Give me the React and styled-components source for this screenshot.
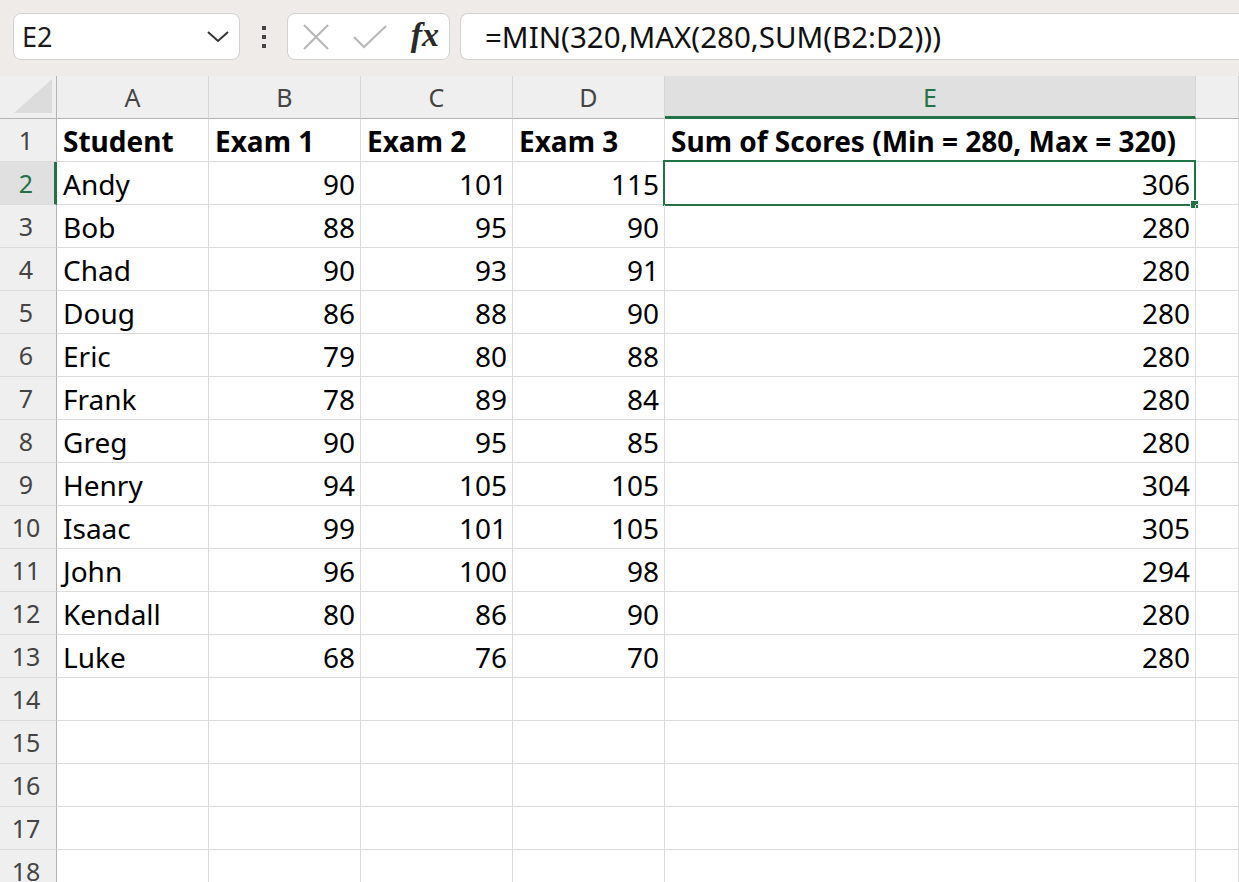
import React from 'react';
import styled, { createGlobalStyle } from 'styled-components';

const GlobalStyle = createGlobalStyle`
  html, body {
    margin: 0;
    padding: 0;
    background: #ffffff;
    overflow: hidden;
  }
  body {
    font-family: "Noto Sans", "Open Sans", sans-serif;
  }
`;

const GREEN = '#217346';

const columns = ['A', 'B', 'C', 'D', 'E', ''];
const widths = '57px 152px 152px 152px 152px 531px 1fr';

const data = [
  ['Student', 'Exam 1', 'Exam 2', 'Exam 3', 'Sum of Scores (Min = 280, Max = 320)'],
  ['Andy', 90, 101, 115, 306],
  ['Bob', 88, 95, 90, 280],
  ['Chad', 90, 93, 91, 280],
  ['Doug', 86, 88, 90, 280],
  ['Eric', 79, 80, 88, 280],
  ['Frank', 78, 89, 84, 280],
  ['Greg', 90, 95, 85, 280],
  ['Henry', 94, 105, 105, 304],
  ['Isaac', 99, 101, 105, 305],
  ['John', 96, 100, 98, 294],
  ['Kendall', 80, 86, 90, 280],
  ['Luke', 68, 76, 70, 280],
];

const ROWS = 18;

export default function App() {
  return (
    <Page>
      <GlobalStyle />
      <Toolbar>
        <NameBox>
          <span>E2</span>
          <svg width="24" height="14" viewBox="0 0 24 14">
            <path d="M2 2 L12 11 L22 2" fill="none" stroke="#333" strokeWidth="2" />
          </svg>
        </NameBox>
        <Dots>
          <i />
          <i />
          <i />
        </Dots>
        <FxBox>
          <svg width="28" height="28" viewBox="0 0 28 28">
            <path d="M2 2 L26 26 M26 2 L2 26" stroke="#b8b8b8" strokeWidth="2.2" fill="none" />
          </svg>
          <svg width="36" height="26" viewBox="0 0 36 26">
            <path d="M2 13 L12 23 L34 2" stroke="#b8b8b8" strokeWidth="2.2" fill="none" />
          </svg>
          <Fx>fx</Fx>
        </FxBox>
        <FormulaBox>=MIN(320,MAX(280,SUM(B2:D2)))</FormulaBox>
      </Toolbar>

      <Sheet>
        <Corner>
          <svg width="40" height="36" viewBox="0 0 40 36">
            <path d="M38 0 L38 34 L0 34 Z" fill="#dcdcdc" />
          </svg>
        </Corner>
        {columns.map((c, i) => (
          <ColHead key={i} $active={c === 'E'}>
            {c}
          </ColHead>
        ))}

        {Array.from({ length: ROWS }).map((_, r) => {
          const row = data[r];
          return (
            <React.Fragment key={r}>
              <RowHead $active={r === 1}>{r + 1}</RowHead>
              {columns.map((c, ci) => {
                const v = row ? row[ci] : undefined;
                const num = typeof v === 'number';
                return (
                  <Cell key={ci} $bold={r === 0} $num={num}>
                    {v}
                    {r === 1 && ci === 4 && <Selection />}
                  </Cell>
                );
              })}
            </React.Fragment>
          );
        })}
      </Sheet>
    </Page>
  );
}

const Page = styled.div`
  width: 1239px;
  height: 882px;
  overflow: hidden;
  background: #ffffff;
`;

const Toolbar = styled.div`
  height: 76px;
  box-sizing: border-box;
  background: #eeebe8;
  display: flex;
  align-items: flex-start;
  padding: 13px 0 0 13px;
`;

const Box = styled.div`
  height: 47px;
  box-sizing: border-box;
  background: #ffffff;
  border: 1px solid #d4d2cf;
  border-radius: 8px;
  display: flex;
  align-items: center;
`;

const NameBox = styled(Box)`
  width: 227px;
  padding: 0 9px 0 8px;
  justify-content: space-between;
  font-size: 27px;
  color: #1a1a1a;
`;

const Dots = styled.div`
  width: 47px;
  height: 47px;
  display: flex;
  flex-direction: column;
  align-items: center;
  justify-content: center;
  gap: 5px;

  i {
    display: block;
    width: 4px;
    height: 4px;
    background: #444;
  }
`;

const FxBox = styled(Box)`
  width: 163px;
  padding: 0 10px 0 14px;
  justify-content: space-between;
`;

const Fx = styled.span`
  font-family: "Liberation Serif", serif;
  font-style: italic;
  font-weight: bold;
  font-size: 34px;
  color: #2a2a2a;
  margin-top: -4px;
`;

const FormulaBox = styled(Box)`
  flex: 1;
  margin-left: 10px;
  padding-left: 24px;
  border-top-right-radius: 0;
  border-bottom-right-radius: 0;
  border-right: none;
  font-size: 29.5px;
  color: #111;
  white-space: nowrap;
`;

const Sheet = styled.div`
  display: grid;
  grid-template-columns: ${widths};
  grid-auto-rows: 43px;
  grid-template-rows: 43px;
`;

const HeadBase = styled.div`
  box-sizing: border-box;
  background: #efefef;
  display: flex;
  align-items: center;
  color: #444;
  font-size: 25px;
`;

const Corner = styled(HeadBase)`
  border-bottom: 1px solid #b4b4b4;
  border-right: 1px solid #b4b4b4;
  align-items: flex-end;
  justify-content: flex-end;
  padding: 0 2px 3px 0;
`;

const ColHead = styled(HeadBase)`
  justify-content: center;
  border-right: 1px solid #d6d6d6;
  border-bottom: ${(p) => (p.$active ? `3px solid ${GREEN}` : '1px solid #b4b4b4')};
  background: ${(p) => (p.$active ? '#e0e0e0' : '#efefef')};
  color: ${(p) => (p.$active ? GREEN : '#444')};
  padding-top: ${(p) => (p.$active ? '2px' : '0')};
`;

const RowHead = styled(HeadBase)`
  justify-content: center;
  padding-right: 4px;
  border-bottom: 1px solid #dcdcdc;
  border-right: ${(p) => (p.$active ? `3px solid ${GREEN}` : '1px solid #b4b4b4')};
  background: ${(p) => (p.$active ? '#e0e0e0' : '#efefef')};
  color: ${(p) => (p.$active ? GREEN : '#444')};
  padding-left: ${(p) => (p.$active ? '2px' : '0')};
`;

const Cell = styled.div`
  position: relative;
  box-sizing: border-box;
  border-right: 1px solid #dcdcdc;
  border-bottom: 1px solid #dcdcdc;
  display: flex;
  align-items: center;
  justify-content: ${(p) => (p.$num ? 'flex-end' : 'flex-start')};
  padding: 2px 5px 0 6px;
  font-size: 28px;
  font-weight: ${(p) => (p.$bold ? 700 : 400)};
  color: #000;
  white-space: nowrap;
`;

const Selection = styled.div`
  position: absolute;
  left: -2px;
  top: -2px;
  right: -1px;
  bottom: -2px;
  border: 2px solid ${GREEN};
  pointer-events: none;

  &::after {
    content: '';
    position: absolute;
    right: -5px;
    bottom: -5px;
    width: 7px;
    height: 7px;
    background: ${GREEN};
    border: 1px solid #fff;
  }
`;
